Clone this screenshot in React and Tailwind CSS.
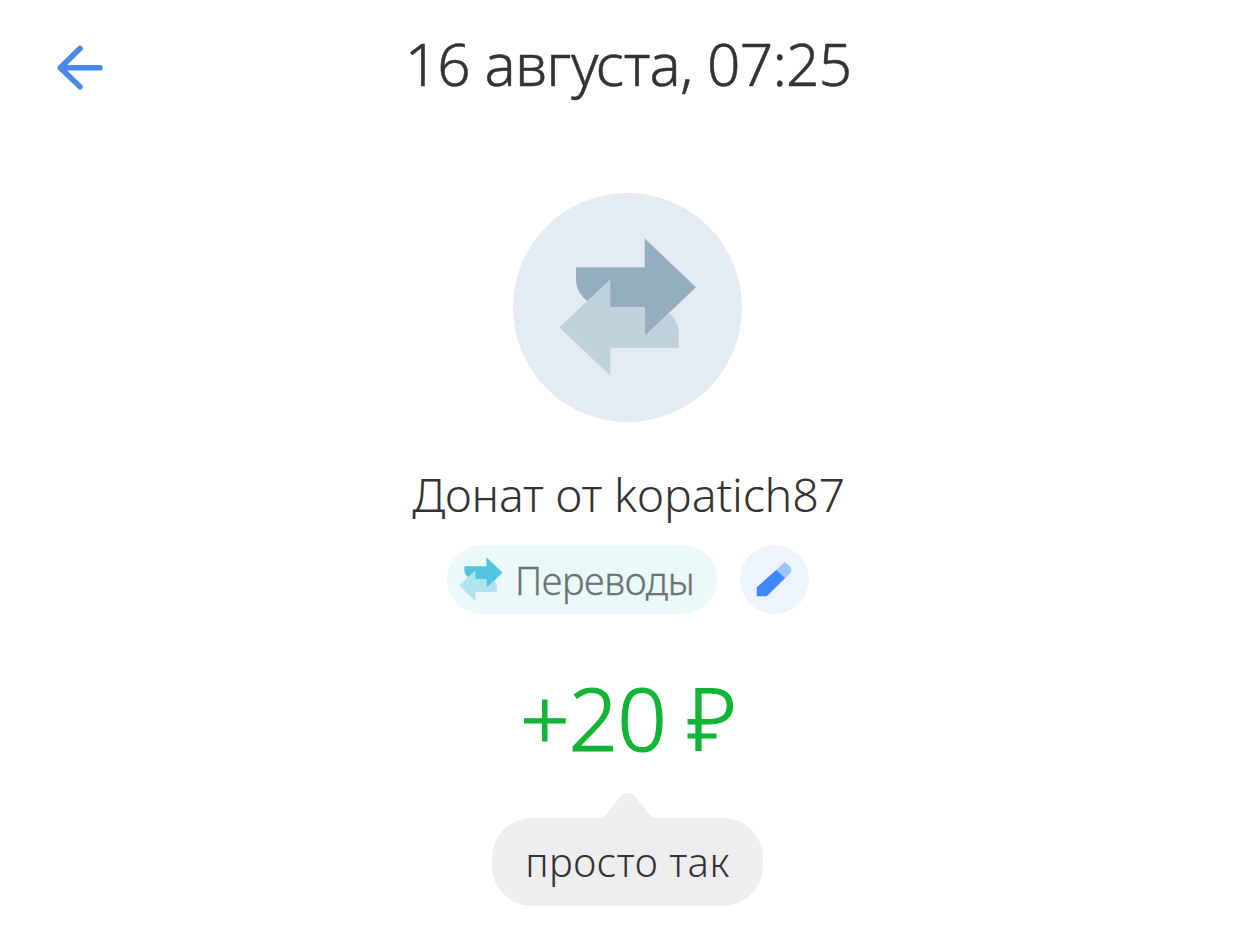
import React from 'react';

const TransferIcon = ({ className, dark, light }) => (
  <svg viewBox="46 45 138 138" className={className} aria-hidden="true">
    <path
      d="M63 74.3H131.7V45.5L183 94.3L131.7 143V114.3H97.3L74.3 107.7C67 102.5 63 95 63 86Z"
      fill={dark}
    />
    <path
      d="M46.3 134.3L97.3 86.3V114.3H131.7V143L156.3 120C162.5 125.5 165.7 132 165.7 141V154.7H97.3V182.7Z"
      fill={light}
    />
  </svg>
);

const PencilIcon = () => (
  <svg viewBox="0 0 69 69" className="size-full" aria-hidden="true">
    <path d="M16.8 42.2L36.5 24.8L45.3 33L26.7 51.3H16.8Z" fill="#4287f7" />
    <path d="M36.5 24.8L44.6 17L50 21.2Q52.4 24 50.6 28L45.3 33Z" fill="#9fc3fb" />
  </svg>
);

const Header = ({ title }) => (
  <header className="grid h-[126px] grid-cols-[1fr_auto_1fr] items-center">
    <button aria-label="Назад" className="ml-[52px] mt-[9px] w-14">
      <svg viewBox="52 40 56 56" className="size-14" fill="none" stroke="#4788e8" strokeWidth="5.6" strokeLinecap="round" strokeLinejoin="round">
        <path d="M80 48.5L60.3 67.7L80 86.7M60.3 67.7H100" />
      </svg>
    </button>
    <h1 className="text-[58.5px] leading-[80px] font-light tracking-[-0.7px] [-webkit-text-stroke:0.5px_#333333]">{title}</h1>
  </header>
);

const Comment = ({ children }) => (
  <div className="mt-[26px] mr-px flex flex-col items-center">
    <svg viewBox="0 0 60 26" className="-mb-px h-[26px] w-[60px]" aria-hidden="true">
      <path d="M0 25.5C5 24.5 8 21.5 10.5 18.5L22 4Q29.7 -4 37.5 4L49 18.5C52 22 55 25 60 25.5V26H0Z" fill="#eeeef0" />
    </svg>
    <p className="flex h-[88px] w-[271px] justify-center rounded-[40px] bg-[#eeeef0] text-[40px] leading-[87px] font-light tracking-[0.5px] whitespace-nowrap">
      {children}
    </p>
  </div>
);

const App = () => {
  return (
    <div className="h-[930px] w-full overflow-hidden bg-white font-['Noto_Sans',sans-serif] text-[#333333]">
      <Header title="16 августа, 07:25" />

      <main className="flex flex-col items-center">
        <div className="mt-[67px] mr-px flex size-[229px] rounded-full bg-[#e4ebf3] pt-[45px] pl-[46px]">
          <TransferIcon className="size-[138px]" dark="#94aec0" light="#c1d1dc" />
        </div>

        <h2 className="mt-[42px] ml-px text-[46.5px] leading-[60px] font-light tracking-[-0.2px]">Донат от kopatich87</h2>

        {/* Category */}
        <div className="mt-[21px] flex gap-[23px]">
          <div className="flex h-[69px] w-[270px] items-center rounded-full bg-[#ebf9fb] pl-3">
            <TransferIcon className="mb-0.5 size-11 shrink-0" dark="#52c6e1" light="#afe4ef" />
            <span className="ml-3 text-[38px] leading-[66px] font-light tracking-[-0.35px] text-[#6a7374] [-webkit-text-stroke:0.3px_#6a7374]">Переводы</span>
          </div>
          <button aria-label="Изменить" className="size-[69px] rounded-full bg-[#edf4fe]">
            <PencilIcon />
          </button>
        </div>

        <div className="mt-[53px] text-[87px] leading-[100px] font-light tracking-[-1.1px] text-[#10b535] [-webkit-text-stroke:1.2px_#10b535]">
          +20 ₽
        </div>

        <Comment>просто так</Comment>
      </main>
    </div>
  );
};

export default App;
